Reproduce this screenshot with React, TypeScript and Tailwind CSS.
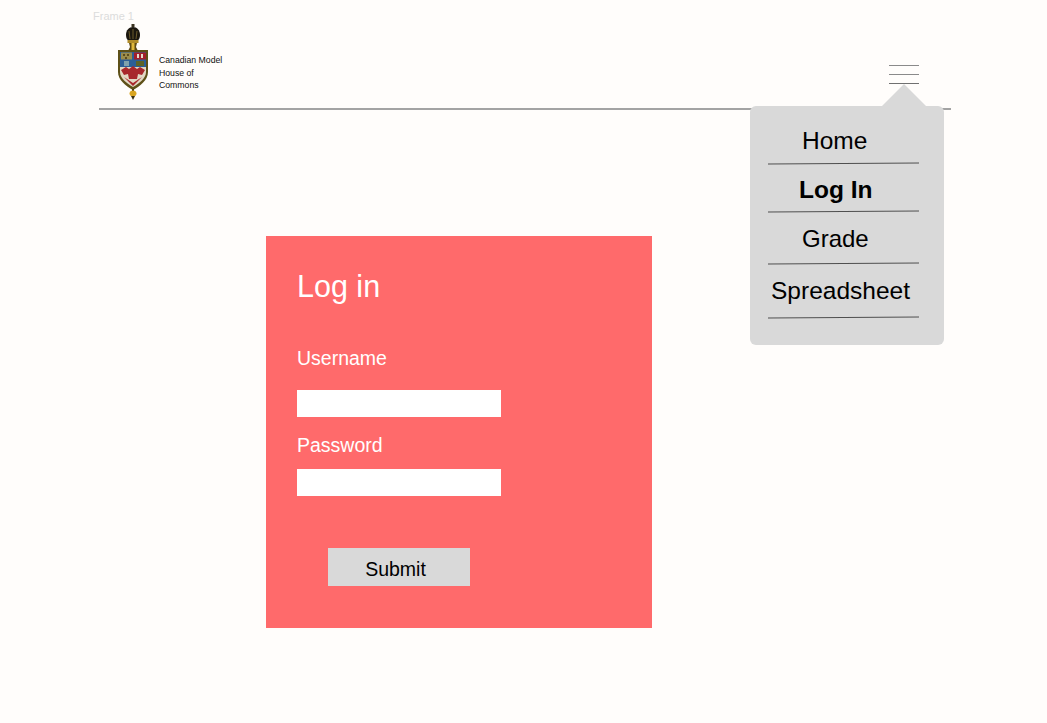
const Crest = () => (
  <svg width="32" height="76" viewBox="0 0 32 76" className="block">
    {/* crown and mace head */}
    <rect x="13.5" y="0" width="3" height="3" fill="#3a3220" />
    <path d="M8 11c0-5 3-8 7-8s7 3 7 8c0 3-1 5-3 6h-8c-2-1-3-3-3-6z" fill="#1a160e" />
    <path d="M11 7l1 8M15 5v10M19 7l-1 8" stroke="#6b5a2c" strokeWidth="1" />
    <rect x="9.5" y="16" width="11" height="3" fill="#b08c2a" />
    <path d="M11 19h8l-1 4 2 4H10l2-4z" fill="#5e4a14" />
    <rect x="13.5" y="19" width="3" height="8" fill="#e0b93c" />
    {/* shield */}
    <path d="M0 26h30v22c0 8-8 14-15 18C8 62 0 56 0 48z" fill="#5e5018" />
    <path d="M2 28h13v15H2z" fill="#2c5f96" />
    <path d="M15 28h13v15H15z" fill="#2c5f96" />
    <path d="M3 28.5h11v7H3z" fill="#9c8d4c" />
    <path d="M5 30h2v2H5zM9 30h2v2H9zM7 33h2v2H7z" fill="#5c4c1e" />
    <path d="M16 28.5h12v7H16z" fill="#a31f2c" />
    <path d="M19 30h2v4h-2zM23 30h2v4h-2z" fill="#e4dccb" />
    <path d="M6 37h5v5H6z" fill="#7fa2ac" />
    <path d="M18 37h8v5h-8z" fill="#5d6428" />
    <path d="M2 43h26v5c0 6-6 11-13 15C8 59 2 54 2 48z" fill="#e2d8c4" />
    <path d="M3 46l5-3 3 2 4-3 4 3 3-2 5 3-3 5-4-1-1 5h-8l-1-5-4 1z" fill="#a8282c" />
    <path d="M6 53l9 6 9-6-9 9z" fill="#a8282c" />
    {/* lower finial */}
    <rect x="14" y="65" width="2" height="2" fill="#4a3c14" />
    <path d="M11.5 69.500c0-2 1.500-3 3.500-3s3.500 1 3.500 3-1.500 3-3.500 3-3.500-1-3.500-3z" fill="#d9a521" />
    <path d="M13 72h4l-2 4z" fill="#3a2f10" />
  </svg>
);

const NavLine = ({ className }: { className: string }) => (
  <div className={`h-px w-[151px] bg-[#4f4f4f] -rotate-[0.3deg] ${className}`} />
);

const Field = ({ label, className }: { label: string; className: string }) => (
  <div className={className}>
    <label className="block text-[19.5px] leading-[24px] text-white">{label}</label>
  </div>
);

export default function App() {
  return (
    <div className="relative h-[723px] w-[1047px] overflow-hidden bg-[#fffdfb] font-['Liberation_Sans',sans-serif]">
      <div className="pl-[93px] pt-[10px] text-[11px] leading-[13px] text-[#dcdcdc]">Frame 1</div>

      {/* header */}
      <header className="ml-[99px] flex h-[87px] w-[852px] items-start border-b-2 border-[#a3a3a3] pl-[19px]">
        <div className="mt-px">
          <Crest />
        </div>
        <div className="ml-[9px] mt-[31px] text-[8.7px] leading-[12.5px] text-[#111111]">
          <div>Canadian Model</div>
          <div>House of</div>
          <div>Commons</div>
        </div>
        <div className="ml-auto mr-[32px] mt-[42px] flex w-[30px] flex-col gap-2">
          <div className="h-px bg-[#8a8a8a]" />
          <div className="h-px bg-[#8a8a8a]" />
          <div className="h-px bg-[#707070]" />
        </div>
      </header>

      {/* login card */}
      <main className="ml-[266px] mt-[126px] h-[392px] w-[386px] bg-[#ff6a6b] pl-[31px] pt-[31px]">
        <h1 className="text-[30.500px] leading-[38px] text-white">Log in</h1>
        <Field label="Username" className="mt-[41px]" />
        <div className="mt-[20px] h-[27px] w-[204px] bg-white" />
        <Field label="Password" className="mt-[16px]" />
        <div className="mt-[12px] h-[27px] w-[204px] bg-white" />
        <button className="ml-[31px] mt-[52px] block h-[38px] w-[142px] bg-[#d9d9d9] pr-[7px] pt-[4px] text-[19.5px] leading-[32px] text-black">
          Submit
        </button>
      </main>

      {/* open menu */}
      <nav className="absolute left-[750px] top-[106px] h-[239px] w-[194px] rounded-[6px] bg-[#d9d9d9] pl-[18px] text-black">
        <div className="absolute left-[132px] top-[-22px] h-0 w-0 border-x-[22px] border-b-[22px] border-x-transparent border-b-[#d9d9d9]" />
        <div className="pl-[34px] pt-[19px] text-[24.5px] leading-[32px]">Home</div>
        <NavLine className="mt-[6px]" />
        <div className="pl-[31px] pt-[10px] text-[24.5px] font-bold leading-[32px]">Log In</div>
        <NavLine className="mt-[5px]" />
        <div className="pl-[34px] pt-[11px] text-[24px] leading-[32px]">Grade</div>
        <NavLine className="mt-[8px]" />
        <div className="pl-[3px] pt-[11px] text-[24.5px] leading-[32px]">Spreadsheet</div>
        <NavLine className="mt-[10px]" />
      </nav>
    </div>
  );
}
